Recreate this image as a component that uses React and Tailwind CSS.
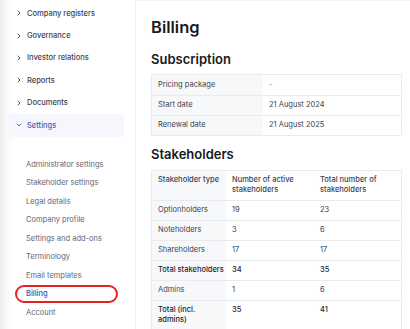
import React from "react";

const mainItems = [
  "Company registers",
  "Governance",
  "Investor relations",
  "Reports",
  "Documents",
];

const subItems = [
  "Administrator settings",
  "Stakeholder settings",
  "Legal details",
  "Company profile",
  "Settings and add-ons",
  "Terminology",
  "Email templates",
  "Billing",
  "Account",
];

const Right = () => (
  <svg width="6" height="6" viewBox="0 0 6 6" className="shrink-0">
    <path d="M2 1 L4 3 L2 5" fill="none" stroke="#3a3f4b" strokeWidth="0.9" strokeLinecap="round" strokeLinejoin="round" />
  </svg>
);

const Down = () => (
  <svg width="6" height="6" viewBox="0 0 6 6" className="shrink-0">
    <path d="M1 2 L3 4 L5 2" fill="none" stroke="#4b5cb0" strokeWidth="0.9" strokeLinecap="round" strokeLinejoin="round" />
  </svg>
);

const subscription = [
  ["Pricing package", "-"],
  ["Start date", "21 August 2024"],
  ["Renewal date", "21 August 2025"],
];

const stake = [
  ["Optionholders", "19", "23", false],
  ["Noteholders", "3", "6", false],
  ["Shareholders", "17", "17", false],
  ["Total stakeholders", "34", "35", true],
  ["Admins", "1", "6", false],
  ["Total (incl. admins)", "35", "41", true],
];

export default function App() {
  return (
    <div className="flex w-[410px] h-[329px] overflow-hidden bg-white font-['Inter',sans-serif] text-[#3d4250]">
      <aside className="w-[136px] shrink-0 border-r border-[#eef0f4] bg-[linear-gradient(to_right,#ececec,#f8f8f8_6px,#ffffff_14px)]">
        <nav className="pt-[2px]">
          {mainItems.map((t) => (
            <div key={t} className="h-[22.4px] flex items-center gap-[5px] pl-[16px] text-[7.5px] font-medium text-[#3d4250]">
              <Right />
              <span>{t}</span>
            </div>
          ))}
          <div className="mx-[8px] w-[116px] h-[23px] rounded-[4px] bg-[#f5f7fc] flex items-center gap-[5px] pl-[8px] text-[7.5px] font-medium text-[#4b5cb0]">
            <Down />
            <span>Settings</span>
          </div>
          <div className="pt-[18px]">
            {subItems.map((t) => (
              <div key={t} className="h-[18.55px] flex items-center">
                <div
                  className={
                    t === "Billing"
                      ? "ml-[15px] w-[103px] h-[18.5px] flex items-center pl-[9px] rounded-full border-2 border-[#e2231f] text-[7.5px] font-medium text-[#3f51a8]"
                      : "ml-[15px] w-[103px] h-[18.5px] flex items-center pl-[9px] rounded-full border-2 border-transparent text-[7.5px] text-[#5f6572]"
                  }
                >
                  {t}
                </div>
              </div>
            ))}
          </div>
        </nav>
      </aside>
      <main className="flex-1 border-t border-[#f1f3f6] pl-[15px] pr-[8px] pt-[14px]">
        <h1 className="text-[16.5px] leading-[24px] font-semibold text-[#17191e]">Billing</h1>
        <h2 className="mt-[10.5px] text-[13px] leading-[18px] font-semibold text-[#17191e]">Subscription</h2>
        <div className="mt-[6px] border border-[#e9ebef]">
          {subscription.map(([a, b], i) => (
            <div key={a} className={"grid grid-cols-[111px_1fr] h-[20px] " + (i > 0 ? "border-t border-[#e9ebef]" : "")}>
              <div className="bg-[#f7f8fa] flex items-center px-[6px] text-[7.5px]">{a}</div>
              <div className={"flex items-center px-[6px] text-[7.5px] " + (b === "-" ? "text-[#8a8f99]" : "")}>{b}</div>
            </div>
          ))}
        </div>
        <h2 className="mt-[9.5px] text-[13px] leading-[18px] font-semibold text-[#17191e]">Stakeholders</h2>
        <div className="mt-[6.5px] border border-[#e9ebef] text-[7.5px] leading-[10px]">
          <div className="grid grid-cols-[74px_88px_1fr]">
            <div className="bg-[#f7f8fa] px-[6px] py-[4.5px] font-medium whitespace-nowrap">Stakeholder type</div>
            <div className="px-[6px] py-[4.5px] font-medium">Number of active<br />stakeholders</div>
            <div className="px-[6px] py-[4.5px] font-medium">Total number of<br />stakeholders</div>
          </div>
          {stake.map(([a, b, c, bold]) => (
            <div key={a} className={"grid grid-cols-[74px_88px_1fr] border-t border-[#e9ebef] " + (bold ? "font-medium text-[#22252c]" : "")}>
              <div className="bg-[#f7f8fa] px-[6px] py-[4.5px] whitespace-nowrap">
                {a === "Total (incl. admins)" ? (
                  <>Total (incl.<br />admins)</>
                ) : (
                  a
                )}
              </div>
              <div className="px-[6px] py-[4.5px]">{b}</div>
              <div className="px-[6px] py-[4.5px]">{c}</div>
            </div>
          ))}
        </div>
      </main>
    </div>
  );
}
